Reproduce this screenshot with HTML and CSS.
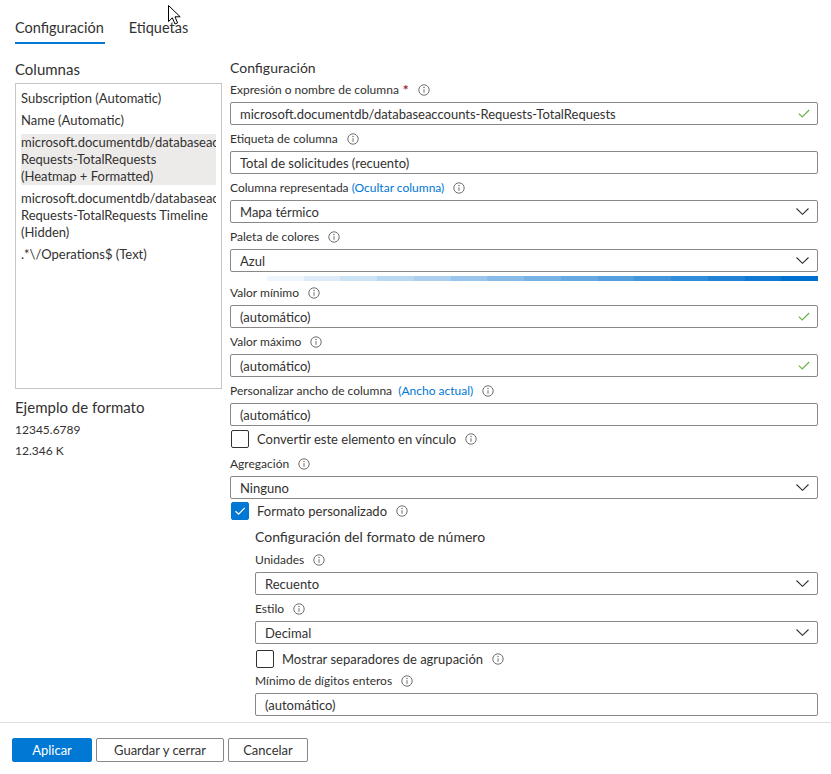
FILE: index.html
```html
<!DOCTYPE html>
<html lang="es">
<head>
<meta charset="utf-8">
<title>Configuración de columna</title>
<link rel="stylesheet" href="styles.css">
</head>
<body>
<div class="app">
  <nav class="tabs">
    <div class="tab active">Configuración</div>
    <div class="tab">Etiquetas</div>
  </nav>

  <div class="content">
    <aside class="left">
      <div class="left-title">Columnas</div>
      <div class="col-list">
        <div class="col-item"><span class="ln">Subscription (Automatic)</span></div>
        <div class="col-item"><span class="ln">Name (Automatic)</span></div>
        <div class="col-item selected">
          <span class="ln">microsoft.documentdb/databaseaccounts-</span>
          <span class="ln">Requests-TotalRequests</span>
          <span class="ln">(Heatmap + Formatted)</span>
        </div>
        <div class="col-item">
          <span class="ln">microsoft.documentdb/databaseaccounts-</span>
          <span class="ln">Requests-TotalRequests Timeline</span>
          <span class="ln">(Hidden)</span>
        </div>
        <div class="col-item"><span class="ln">.*\/Operations$ (Text)</span></div>
      </div>
      <div class="sample-title">Ejemplo de formato</div>
      <div class="samples">
        <div class="sample">12345.6789</div>
        <div class="sample">12.346 K</div>
      </div>
    </aside>

    <main class="right">
      <div class="right-title">Configuración</div>

      <div class="field first">
        <div class="label">Expresión o nombre de columna<span class="req">*</span><svg class="info" viewBox="0 0 12 12"><circle cx="6" cy="6" r="5.2"/><line x1="6" y1="5.2" x2="6" y2="8.8"/><circle class="dot" cx="6" cy="3.5" r="0.7"/></svg></div>
        <div class="input"><span>microsoft.documentdb/databaseaccounts-Requests-TotalRequests</span><svg class="ok" viewBox="0 0 12 9"><path d="M0.8 4.6 L4.2 8 L11.2 1"/></svg></div>
      </div>

      <div class="field">
        <div class="label">Etiqueta de columna<svg class="info" viewBox="0 0 12 12"><circle cx="6" cy="6" r="5.2"/><line x1="6" y1="5.2" x2="6" y2="8.8"/><circle class="dot" cx="6" cy="3.5" r="0.7"/></svg></div>
        <div class="input"><span>Total de solicitudes (recuento)</span></div>
      </div>

      <div class="field">
        <div class="label">Columna representada&nbsp;<span class="link">(Ocultar columna)</span><svg class="info" viewBox="0 0 12 12"><circle cx="6" cy="6" r="5.2"/><line x1="6" y1="5.2" x2="6" y2="8.8"/><circle class="dot" cx="6" cy="3.5" r="0.7"/></svg></div>
        <div class="input select"><span>Mapa térmico</span><svg class="chev" viewBox="0 0 13 7"><path d="M0.5 0.5 L6.5 6.3 L12.5 0.5"/></svg></div>
      </div>

      <div class="field">
        <div class="label">Paleta de colores<svg class="info" viewBox="0 0 12 12"><circle cx="6" cy="6" r="5.2"/><line x1="6" y1="5.2" x2="6" y2="8.8"/><circle class="dot" cx="6" cy="3.5" r="0.7"/></svg></div>
        <div class="input select"><span>Azul</span><svg class="chev" viewBox="0 0 13 7"><path d="M0.5 0.5 L6.5 6.3 L12.5 0.5"/></svg></div>
      </div>

      <div class="palette">
        <span class="p0"></span><span class="p1"></span><span class="p2"></span><span class="p3"></span>
        <span class="p4"></span><span class="p5"></span><span class="p6"></span><span class="p7"></span>
        <span class="p8"></span><span class="p9"></span><span class="p10"></span><span class="p11"></span>
        <span class="p12"></span><span class="p13"></span><span class="p14"></span><span class="p15"></span>
      </div>

      <div class="field after-bar">
        <div class="label">Valor mínimo<svg class="info" viewBox="0 0 12 12"><circle cx="6" cy="6" r="5.2"/><line x1="6" y1="5.2" x2="6" y2="8.8"/><circle class="dot" cx="6" cy="3.5" r="0.7"/></svg></div>
        <div class="input"><span>(automático)</span><svg class="ok" viewBox="0 0 12 9"><path d="M0.8 4.6 L4.2 8 L11.2 1"/></svg></div>
      </div>

      <div class="field">
        <div class="label">Valor máximo<svg class="info" viewBox="0 0 12 12"><circle cx="6" cy="6" r="5.2"/><line x1="6" y1="5.2" x2="6" y2="8.8"/><circle class="dot" cx="6" cy="3.5" r="0.7"/></svg></div>
        <div class="input"><span>(automático)</span><svg class="ok" viewBox="0 0 12 9"><path d="M0.8 4.6 L4.2 8 L11.2 1"/></svg></div>
      </div>

      <div class="field">
        <div class="label">Personalizar ancho de columna&nbsp;&nbsp;<span class="link">(Ancho actual)</span><svg class="info" viewBox="0 0 12 12"><circle cx="6" cy="6" r="5.2"/><line x1="6" y1="5.2" x2="6" y2="8.8"/><circle class="dot" cx="6" cy="3.5" r="0.7"/></svg></div>
        <div class="input"><span>(automático)</span></div>
      </div>

      <div class="check-row cr-link">
        <span class="box"></span>
        <span class="check-text">Convertir este elemento en vínculo</span>
        <svg class="info" viewBox="0 0 12 12"><circle cx="6" cy="6" r="5.2"/><line x1="6" y1="5.2" x2="6" y2="8.8"/><circle class="dot" cx="6" cy="3.5" r="0.7"/></svg>
      </div>

      <div class="field agg">
        <div class="label">Agregación<svg class="info" viewBox="0 0 12 12"><circle cx="6" cy="6" r="5.2"/><line x1="6" y1="5.2" x2="6" y2="8.8"/><circle class="dot" cx="6" cy="3.5" r="0.7"/></svg></div>
        <div class="input select"><span>Ninguno</span><svg class="chev" viewBox="0 0 13 7"><path d="M0.5 0.5 L6.5 6.3 L12.5 0.5"/></svg></div>
      </div>

      <div class="check-row cr-format">
        <span class="box checked"><svg viewBox="0 0 12 10"><path d="M1.5 5.2 L4.6 8.2 L10.8 1.8"/></svg></span>
        <span class="check-text">Formato personalizado</span>
        <svg class="info" viewBox="0 0 12 12"><circle cx="6" cy="6" r="5.2"/><line x1="6" y1="5.2" x2="6" y2="8.8"/><circle class="dot" cx="6" cy="3.5" r="0.7"/></svg>
      </div>

      <section class="sub">
        <div class="sub-title">Configuración del formato de número</div>

        <div class="field units">
          <div class="label">Unidades<svg class="info" viewBox="0 0 12 12"><circle cx="6" cy="6" r="5.2"/><line x1="6" y1="5.2" x2="6" y2="8.8"/><circle class="dot" cx="6" cy="3.5" r="0.7"/></svg></div>
          <div class="input select"><span>Recuento</span><svg class="chev" viewBox="0 0 13 7"><path d="M0.5 0.5 L6.5 6.3 L12.5 0.5"/></svg></div>
        </div>

        <div class="field">
          <div class="label">Estilo<svg class="info" viewBox="0 0 12 12"><circle cx="6" cy="6" r="5.2"/><line x1="6" y1="5.2" x2="6" y2="8.8"/><circle class="dot" cx="6" cy="3.5" r="0.7"/></svg></div>
          <div class="input select"><span>Decimal</span><svg class="chev" viewBox="0 0 13 7"><path d="M0.5 0.5 L6.5 6.3 L12.5 0.5"/></svg></div>
        </div>

        <div class="check-row cr-sep">
          <span class="box"></span>
          <span class="check-text">Mostrar separadores de agrupación</span>
          <svg class="info" viewBox="0 0 12 12"><circle cx="6" cy="6" r="5.2"/><line x1="6" y1="5.2" x2="6" y2="8.8"/><circle class="dot" cx="6" cy="3.5" r="0.7"/></svg>
        </div>

        <div class="field mindig">
          <div class="label">Mínimo de dígitos enteros<svg class="info" viewBox="0 0 12 12"><circle cx="6" cy="6" r="5.2"/><line x1="6" y1="5.2" x2="6" y2="8.8"/><circle class="dot" cx="6" cy="3.5" r="0.7"/></svg></div>
          <div class="input"><span>(automático)</span></div>
        </div>
      </section>
    </main>
  </div>

  <footer class="footer">
    <button class="btn primary">Aplicar</button>
    <button class="btn save">Guardar y cerrar</button>
    <button class="btn">Cancelar</button>
  </footer>

  <svg class="cursor" viewBox="0 0 13 20"><path d="M0.5 0.5 L0.5 16.5 L4.3 12.8 L7 19 L9.6 17.9 L7 11.8 L12.2 11.8 Z"/></svg>
</div>
</body>
</html>
```

FILE: styles.css
```css
* { box-sizing: border-box; }

html, body {
  margin: 0;
  padding: 0;
  background: #ffffff;
}

body {
  font-family: "Lato", "Noto Sans", "Liberation Sans", sans-serif;
  color: #323130;
  font-size: 13px;
}

.app {
  position: relative;
  height: 774px;
  display: flex;
  flex-direction: column;
  overflow: hidden;
}

/* Tabs */
.tabs {
  flex: none;
  display: flex;
  gap: 24px;
  height: 44px;
  padding: 18px 0 0 15px;
}

.tab {
  font-size: 14.5px;
  line-height: 20px;
  height: 26px;
  padding: 0 1px 4px 0;
}

.tab.active {
  border-bottom: 2px solid #0078d4;
}

/* Main area */
.content {
  flex: 1;
  min-height: 0;
  display: flex;
  gap: 8px;
  padding: 0 13px 0 15px;
  overflow: hidden;
}

.left {
  flex: none;
  width: 207px;
}

.left-title {
  font-size: 15px;
  line-height: 20px;
  margin-top: 15px;
  margin-bottom: 4px;
}

.col-list {
  height: 306px;
  border: 1px solid #c8c6c4;
  padding: 6px 5px 5px;
  overflow: hidden;
}

.col-item {
  line-height: 17px;
  margin-bottom: 5px;
}

.col-item.selected {
  background: #edebe9;
}

.ln {
  display: block;
  white-space: nowrap;
  overflow: hidden;
}

.sample-title {
  font-size: 15px;
  line-height: 20px;
  margin-top: 8px;
}

.samples {
  padding-top: 2px;
}

.sample {
  font-size: 12px;
  line-height: 21px;
}

/* Right side */
.right {
  flex: 1;
  min-width: 0;
}

.right-title {
  font-size: 14px;
  line-height: 20px;
  margin-top: 14px;
}

.field {
  margin-top: 6px;
}

.field.first { margin-top: 4px; }
.field.after-bar { margin-top: 4px; }
.field.agg { margin-top: 7px; }
.field.units { margin-top: 5px; }
.field.mindig { margin-top: 4px; }

.label {
  display: flex;
  align-items: center;
  font-size: 12px;
  line-height: 16px;
  height: 16px;
  margin-bottom: 4px;
  white-space: nowrap;
}

.req {
  color: #a4262c;
  margin-left: 4px;
  font-size: 14px;
  font-weight: 700;
}

.link {
  color: #0078d4;
}

.info {
  width: 12px;
  height: 12px;
  margin-left: 9px;
  flex: none;
  fill: none;
  stroke: #605e5c;
  stroke-width: 0.9;
}

.info .dot {
  fill: #605e5c;
  stroke: none;
}

.input {
  height: 23px;
  border: 1px solid #8a8886;
  border-radius: 2px;
  padding: 0 7px 0 9px;
  display: flex;
  align-items: center;
  justify-content: space-between;
  font-size: 13px;
  white-space: nowrap;
  overflow: hidden;
}

.ok {
  width: 12px;
  height: 9px;
  flex: none;
  fill: none;
  stroke: #6bb34a;
  stroke-width: 1.2;
}

.select {
  padding-right: 8px;
}

.chev {
  width: 13px;
  height: 7px;
  flex: none;
  fill: none;
  stroke: #323130;
  stroke-width: 1.1;
}

/* Palette preview */
.palette {
  display: flex;
  height: 5px;
  margin-top: 4px;
}

.palette span { flex: 1; }
.p0  { background: #ffffff; }
.p1  { background: #eef5fc; }
.p2  { background: #ddebf8; }
.p3  { background: #cce2f5; }
.p4  { background: #bbd8f2; }
.p5  { background: #aacfef; }
.p6  { background: #99c5ec; }
.p7  { background: #88bce8; }
.p8  { background: #77b2e5; }
.p9  { background: #66a9e2; }
.p10 { background: #559fdf; }
.p11 { background: #4496dc; }
.p12 { background: #338cd9; }
.p13 { background: #2283d6; }
.p14 { background: #1179d3; }
.p15 { background: #0070d0; }

/* Checkboxes */
.check-row {
  display: flex;
  align-items: center;
  height: 20px;
  font-size: 13px;
}

.cr-link { margin-top: 3px; }
.cr-format { margin-top: 2px; }
.cr-sep { margin-top: 5px; }

.box {
  width: 18px;
  height: 18px;
  border: 1px solid #323130;
  border-radius: 2px;
  margin-left: 1px;
  margin-right: 8px;
  flex: none;
  display: flex;
  align-items: center;
  justify-content: center;
}

.box.checked {
  background: #0078d4;
  border-color: #0078d4;
}

.box svg {
  width: 12px;
  height: 10px;
  fill: none;
  stroke: #ffffff;
  stroke-width: 1.2;
}

.check-row .info {
  margin-left: 9px;
}

/* Number format subsection */
.sub {
  padding-left: 25px;
}

.sub-title {
  font-size: 14px;
  line-height: 20px;
  margin-top: 6px;
}

/* Footer */
.footer {
  flex: none;
  height: 52px;
  border-top: 1px solid #e1dfdd;
  padding: 15px 0 0 12px;
  display: flex;
  align-items: flex-start;
  gap: 4px;
}

.btn {
  height: 24px;
  min-width: 80px;
  padding: 0 14px;
  border: 1px solid #8a8886;
  border-radius: 2px;
  background: #ffffff;
  color: #323130;
  font-family: inherit;
  font-size: 13px;
  line-height: 20px;
}

.btn.save {
  padding: 0 17px;
}

.btn.primary {
  background: #0078d4;
  border-color: #0078d4;
  color: #ffffff;
}

/* Mouse pointer captured in the screenshot */
.cursor {
  position: absolute;
  left: 168px;
  top: 5px;
  width: 13px;
  height: 20px;
  fill: #ffffff;
  stroke: #000000;
  stroke-width: 1;
}
```
